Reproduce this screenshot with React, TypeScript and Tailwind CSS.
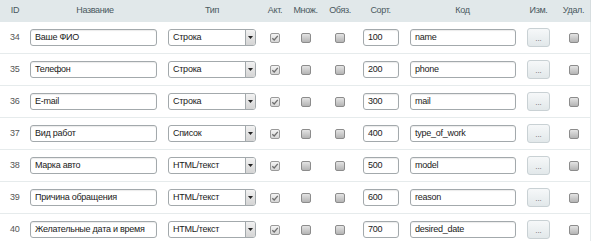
import React from "react";

type Row = { id: number; name: string; type: string; sort: number; code: string };

const rows: Row[] = [
  { id: 34, name: "Ваше ФИО", type: "Строка", sort: 100, code: "name" },
  { id: 35, name: "Телефон", type: "Строка", sort: 200, code: "phone" },
  { id: 36, name: "E-mail", type: "Строка", sort: 300, code: "mail" },
  { id: 37, name: "Вид работ", type: "Список", sort: 400, code: "type_of_work" },
  { id: 38, name: "Марка авто", type: "HTML/текст", sort: 500, code: "model" },
  { id: 39, name: "Причина обращения", type: "HTML/текст", sort: 600, code: "reason" },
  { id: 40, name: "Желательные дата и время", type: "HTML/текст", sort: 700, code: "desired_date" },
];

function Checkbox({ checked }: { checked?: boolean }) {
  return (
    <div
      className={
        "w-[10px] h-[10px] rounded-[2px] border flex items-center justify-center " +
        (checked
          ? "border-[#9a9a9a] bg-gradient-to-b from-[#f4f4f4] to-[#d6d6d6]"
          : "border-[#8c8c8c] bg-gradient-to-b from-[#e4e4e4] to-[#b4b4b4]")
      }
    >
      {checked && (
        <svg width="8" height="8" viewBox="0 0 8 8">
          <path d="M1.3 4.2 L3.2 6 L6.8 1.8" fill="none" stroke="#6f6f6f" strokeWidth="1.3" />
        </svg>
      )}
    </div>
  );
}

function TextInput({ value, w }: { value: string; w: string }) {
  return (
    <div
      className={
        w +
        " h-[17px] rounded-[3px] border border-[#a3a9ac] bg-white flex items-center pl-[4px] whitespace-nowrap overflow-hidden text-[9px] tracking-[-0.25px] text-[#1a1a1a] shadow-[inset_0_1px_1px_rgba(0,0,0,0.08)]"
      }
    >
      {value}
    </div>
  );
}

function Select({ value }: { value: string }) {
  return (
    <div className="w-[88px] h-[17px] rounded-[3px] border border-[#a3a9ac] bg-white flex items-stretch text-[9px] tracking-[-0.25px] text-[#1a1a1a]">
      <div className="flex-1 flex items-center pl-[4px] whitespace-nowrap">{value}</div>
      <div className="w-[10px] border-l border-[#a3a9ac] bg-gradient-to-b from-[#f2f2f2] to-[#d4d4d4] rounded-r-[2px] flex items-center justify-center">
        <svg width="5" height="3" viewBox="0 0 5 3">
          <path d="M0 0 H5 L2.5 3 Z" fill="#222" />
        </svg>
      </div>
    </div>
  );
}

const grid =
  "grid grid-cols-[24px_138px_100px_26px_35px_34px_47px_117px_35px_35px] w-[591px] border-r border-[#d6dddf]";

export default function App() {
  return (
    <div
      className="w-[593px] h-[241px] bg-white overflow-hidden"
      style={{ fontFamily: '"Liberation Sans", Arial, sans-serif' }}
    >
      <div className={grid + " h-[22px] bg-[#e1e8ea] items-center text-[9px] tracking-[-0.35px] text-[#4a5960] whitespace-nowrap"}>
        <div className="text-center pl-[6px]">ID</div>
        <div className="text-center pl-[4px]">Название</div>
        <div className="text-center">Тип</div>
        <div className="text-center">Акт.</div>
        <div className="text-center">Множ.</div>
        <div className="text-center">Обяз.</div>
        <div className="text-center">Сорт.</div>
        <div className="text-center">Код</div>
        <div className="text-center">Изм.</div>
        <div className="text-center">Удал.</div>
      </div>
      {rows.map((r) => (
        <div key={r.id} className={grid + " h-[32px] items-center border-b border-[#e6ebec]"}>
          <div className="pl-[10px] text-[9px] tracking-[-0.25px] text-[#555]">{r.id}</div>
          <div className="pl-[6px]">
            <TextInput value={r.name} w="w-[127px]" />
          </div>
          <div className="pl-[6px]">
            <Select value={r.type} />
          </div>
          <div className="flex justify-center">
            <Checkbox checked />
          </div>
          <div className="flex justify-center">
            <Checkbox />
          </div>
          <div className="flex justify-center">
            <Checkbox />
          </div>
          <div className="pl-[6px]">
            <TextInput value={String(r.sort)} w="w-[36px]" />
          </div>
          <div className="pl-[6px]">
            <TextInput value={r.code} w="w-[106px]" />
          </div>
          <div className="pl-[6px]">
            <div className="w-[23px] h-[19px] rounded-[3px] border border-[#c9d1d4] bg-gradient-to-b from-[#f6f8f9] to-[#e2e8ea] flex items-center justify-center text-[8px] text-[#666] leading-none pt-[2px]">
              ...
            </div>
          </div>
          <div className="flex justify-center">
            <Checkbox />
          </div>
        </div>
      ))}
    </div>
  );
}
